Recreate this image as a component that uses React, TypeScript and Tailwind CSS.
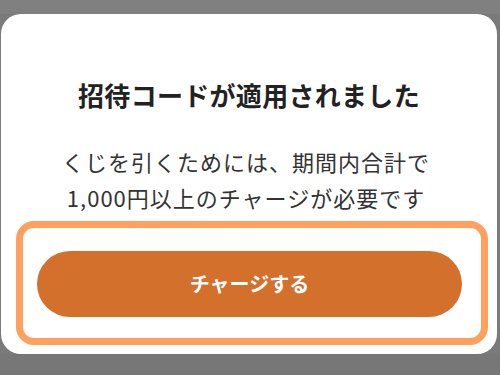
export default function App() {
  return (
    <div
      className="flex h-[375px] w-[500px] flex-col overflow-hidden bg-[#7a7a7a]"
      style={{ fontFamily: '"Noto Sans CJK JP", "Noto Sans", sans-serif' }}
    >
      <div className="h-[14px] shrink-0 bg-[#808080]" />
      <div className="ml-[1px] flex h-[340px] w-[496px] shrink-0 flex-col rounded-[20px] bg-white">
        <h2 className="mt-[64px] text-center text-[26px] leading-[34px] tracking-[0.3px] font-bold text-[#222]">
          招待コードが適用されました
        </h2>
        <p className="mt-[31px] pr-[6px] text-center text-[22px] leading-[36px] tracking-[1px] text-[#333]">
          くじを引くためには、期間内合計で
          <br />
          1,000円以上のチャージが必要です
        </p>
        <div className="mt-[6px] ml-[15px] h-[124px] w-[472px] rounded-[18px] border-[7px] border-[#ffa05f] pt-[23px] pl-[14px]">
          <button className="flex h-[66px] w-[425px] items-center justify-center rounded-full bg-[#d3702c] text-[20px] font-bold text-white">
            チャージする
          </button>
        </div>
      </div>
      <div className="flex-1 bg-[#777]" />
    </div>
  );
}
